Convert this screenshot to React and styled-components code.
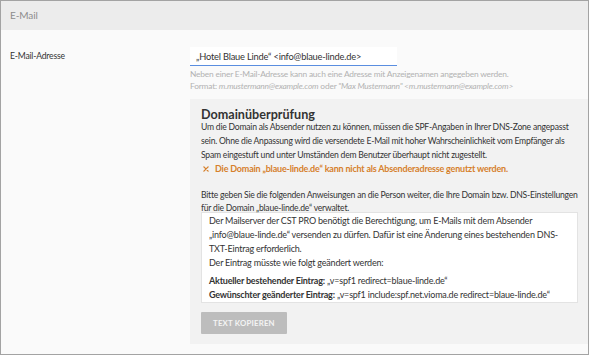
import React from 'react'
import styled, { createGlobalStyle } from 'styled-components'

const GlobalStyle = createGlobalStyle`
  html, body {
    margin: 0;
    padding: 0;
    background: #ffffff;
  }
  body {
    font-family: Lato, "Open Sans", sans-serif;
    color: #333333;
  }
  * {
    box-sizing: border-box;
  }
`

const Frame = styled.div`
  width: 589px;
  height: 355px;
  border: 1px solid #a3a3a3;
  background: #fafafa;
  display: flex;
  flex-direction: column;
  overflow: hidden;
`

const Header = styled.div`
  height: 29px;
  flex: none;
  background: #ececec;
  color: #8d8d8d;
  font-size: 10px;
  line-height: 29px;
  letter-spacing: -0.1px;
  padding-left: 9px;
`

const Body = styled.div`
  display: grid;
  grid-template-columns: 180px 1fr;
  padding: 17px 9px 0 9px;
`

const Label = styled.label`
  font-size: 8.6px;
  letter-spacing: -0.2px;
  line-height: 19px;
  color: #333333;
`

const Field = styled.div`
  display: flex;
  flex-direction: column;
  align-items: flex-start;
`

const Input = styled.input`
  width: 207px;
  height: 19px;
  border: 0;
  border-bottom: 1px solid #5a8ee0;
  background: #ffffff;
  padding: 0 6px;
  font-family: inherit;
  font-size: 9.3px;
  letter-spacing: -0.2px;
  color: #333333;
  outline: none;
`

const Help = styled.p`
  margin: 2px 0 0;
  font-size: 8.4px;
  letter-spacing: -0.2px;
  line-height: 12px;
  white-space: nowrap;
  color: #b2b2b2;

  em {
    font-style: italic;
  }
`

const DomainBox = styled.section`
  align-self: stretch;
  margin-top: 7px;
  background: #f2f2f2;
  padding: 10px 11px 10px;
`

const Title = styled.h3`
  margin: 0;
  font-size: 12.6px;
  line-height: 11px;
  font-weight: 700;
  color: #333333;
`

const Text = styled.p`
  margin: ${({ $gap }) => $gap || 0} 0 0;
  font-size: 8.6px;
  letter-spacing: -0.22px;
  line-height: ${({ $lh }) => $lh || '14px'};
  white-space: nowrap;
  color: #333333;
`

const ErrorLine = styled.div`
  display: flex;
  align-items: center;
  gap: 6px;
  margin-top: 0;
  padding-left: 2px;
  font-size: 9px;
  letter-spacing: -0.2px;
  line-height: 14px;
  font-weight: 700;
  white-space: nowrap;
  color: #d6802c;
`

const CopyBox = styled.div`
  align-self: stretch;
  margin-top: -3px;
  background: #ffffff;
  border: 1px solid #e3e3e3;
  padding: 1px 8px 0 7px;
  font-size: 9px;
  letter-spacing: -0.2px;
  line-height: 14px;
  white-space: nowrap;
  color: #333333;

  p {
    margin: 0;
  }

  b {
    font-weight: 700;
  }
`

const Spacer = styled.div`
  height: 4px;
`

const Button = styled.button`
  display: block;
  margin-top: 9px;
  height: 22px;
  padding: 0 12px;
  border: 0;
  border-radius: 1px;
  background: #bdbdbd;
  color: #f4f4f4;
  font-family: inherit;
  font-size: 7.8px;
  font-weight: 700;
  letter-spacing: 0.2px;
  text-transform: uppercase;
`

const Cross = () => (
  <svg width="6" height="6" viewBox="0 0 10 10">
    <path d="M1.5 1.5 L8.5 8.5 M8.5 1.5 L1.5 8.5" stroke="#d6802c" strokeWidth="2.2" strokeLinecap="round" />
  </svg>
)

const App = () => (
  <>
    <GlobalStyle />
    <Frame>
      <Header>E-Mail</Header>
      <Body>
        <Label htmlFor="email">E-Mail-Adresse</Label>
        <Field>
          <Input id="email" defaultValue={'„Hotel Blaue Linde“ <info@blaue-linde.de>'} />
          <Help>
            Neben einer E-Mail-Adresse kann auch eine Adresse mit Anzeigenamen angegeben werden.
            <br />
            Format: <em>m.mustermann@example.com</em> oder <em>"Max Mustermann" &lt;m.mustermann@example.com&gt;</em>
          </Help>
          <DomainBox>
            <Title>Domainüberprüfung</Title>
            <Text $gap="0px">
              Um die Domain als Absender nutzen zu können, müssen die SPF-Angaben in Ihrer DNS-Zone angepasst
              <br />
              sein. Ohne die Anpassung wird die versendete E-Mail mit hoher Wahrscheinlichkeit vom Empfänger als
              <br />
              Spam eingestuft und unter Umständen dem Benutzer überhaupt nicht zugestellt.
            </Text>
            <ErrorLine>
              <Cross />
              Die Domain „blaue-linde.de“ kann nicht als Absenderadresse genutzt werden.
            </ErrorLine>
            <Text $gap="13px" $lh="13px">
              Bitte geben Sie die folgenden Anweisungen an die Person weiter, die Ihre Domain bzw. DNS-Einstellungen
              <br />
              für die Domain „blaue-linde.de“ verwaltet.
            </Text>
            <CopyBox>
              <p>
                Der Mailserver der CST PRO benötigt die Berechtigung, um E-Mails mit dem Absender
                <br />
                „info@blaue-linde.de“ versenden zu dürfen. Dafür ist eine Änderung eines bestehenden DNS-
                <br />
                TXT-Eintrag erforderlich.
              </p>
              <p>Der Eintrag müsste wie folgt geändert werden:</p>
              <Spacer />
              <p>
                <b>Aktueller bestehender Eintrag:</b> „v=spf1 redirect=blaue-linde.de“
              </p>
              <p>
                <b>Gewünschter geänderter Eintrag:</b> „v=spf1 include:spf.net.vioma.de redirect=blaue-linde.de“
              </p>
            </CopyBox>
            <Button type="button">Text kopieren</Button>
          </DomainBox>
        </Field>
      </Body>
    </Frame>
  </>
)

export default App
